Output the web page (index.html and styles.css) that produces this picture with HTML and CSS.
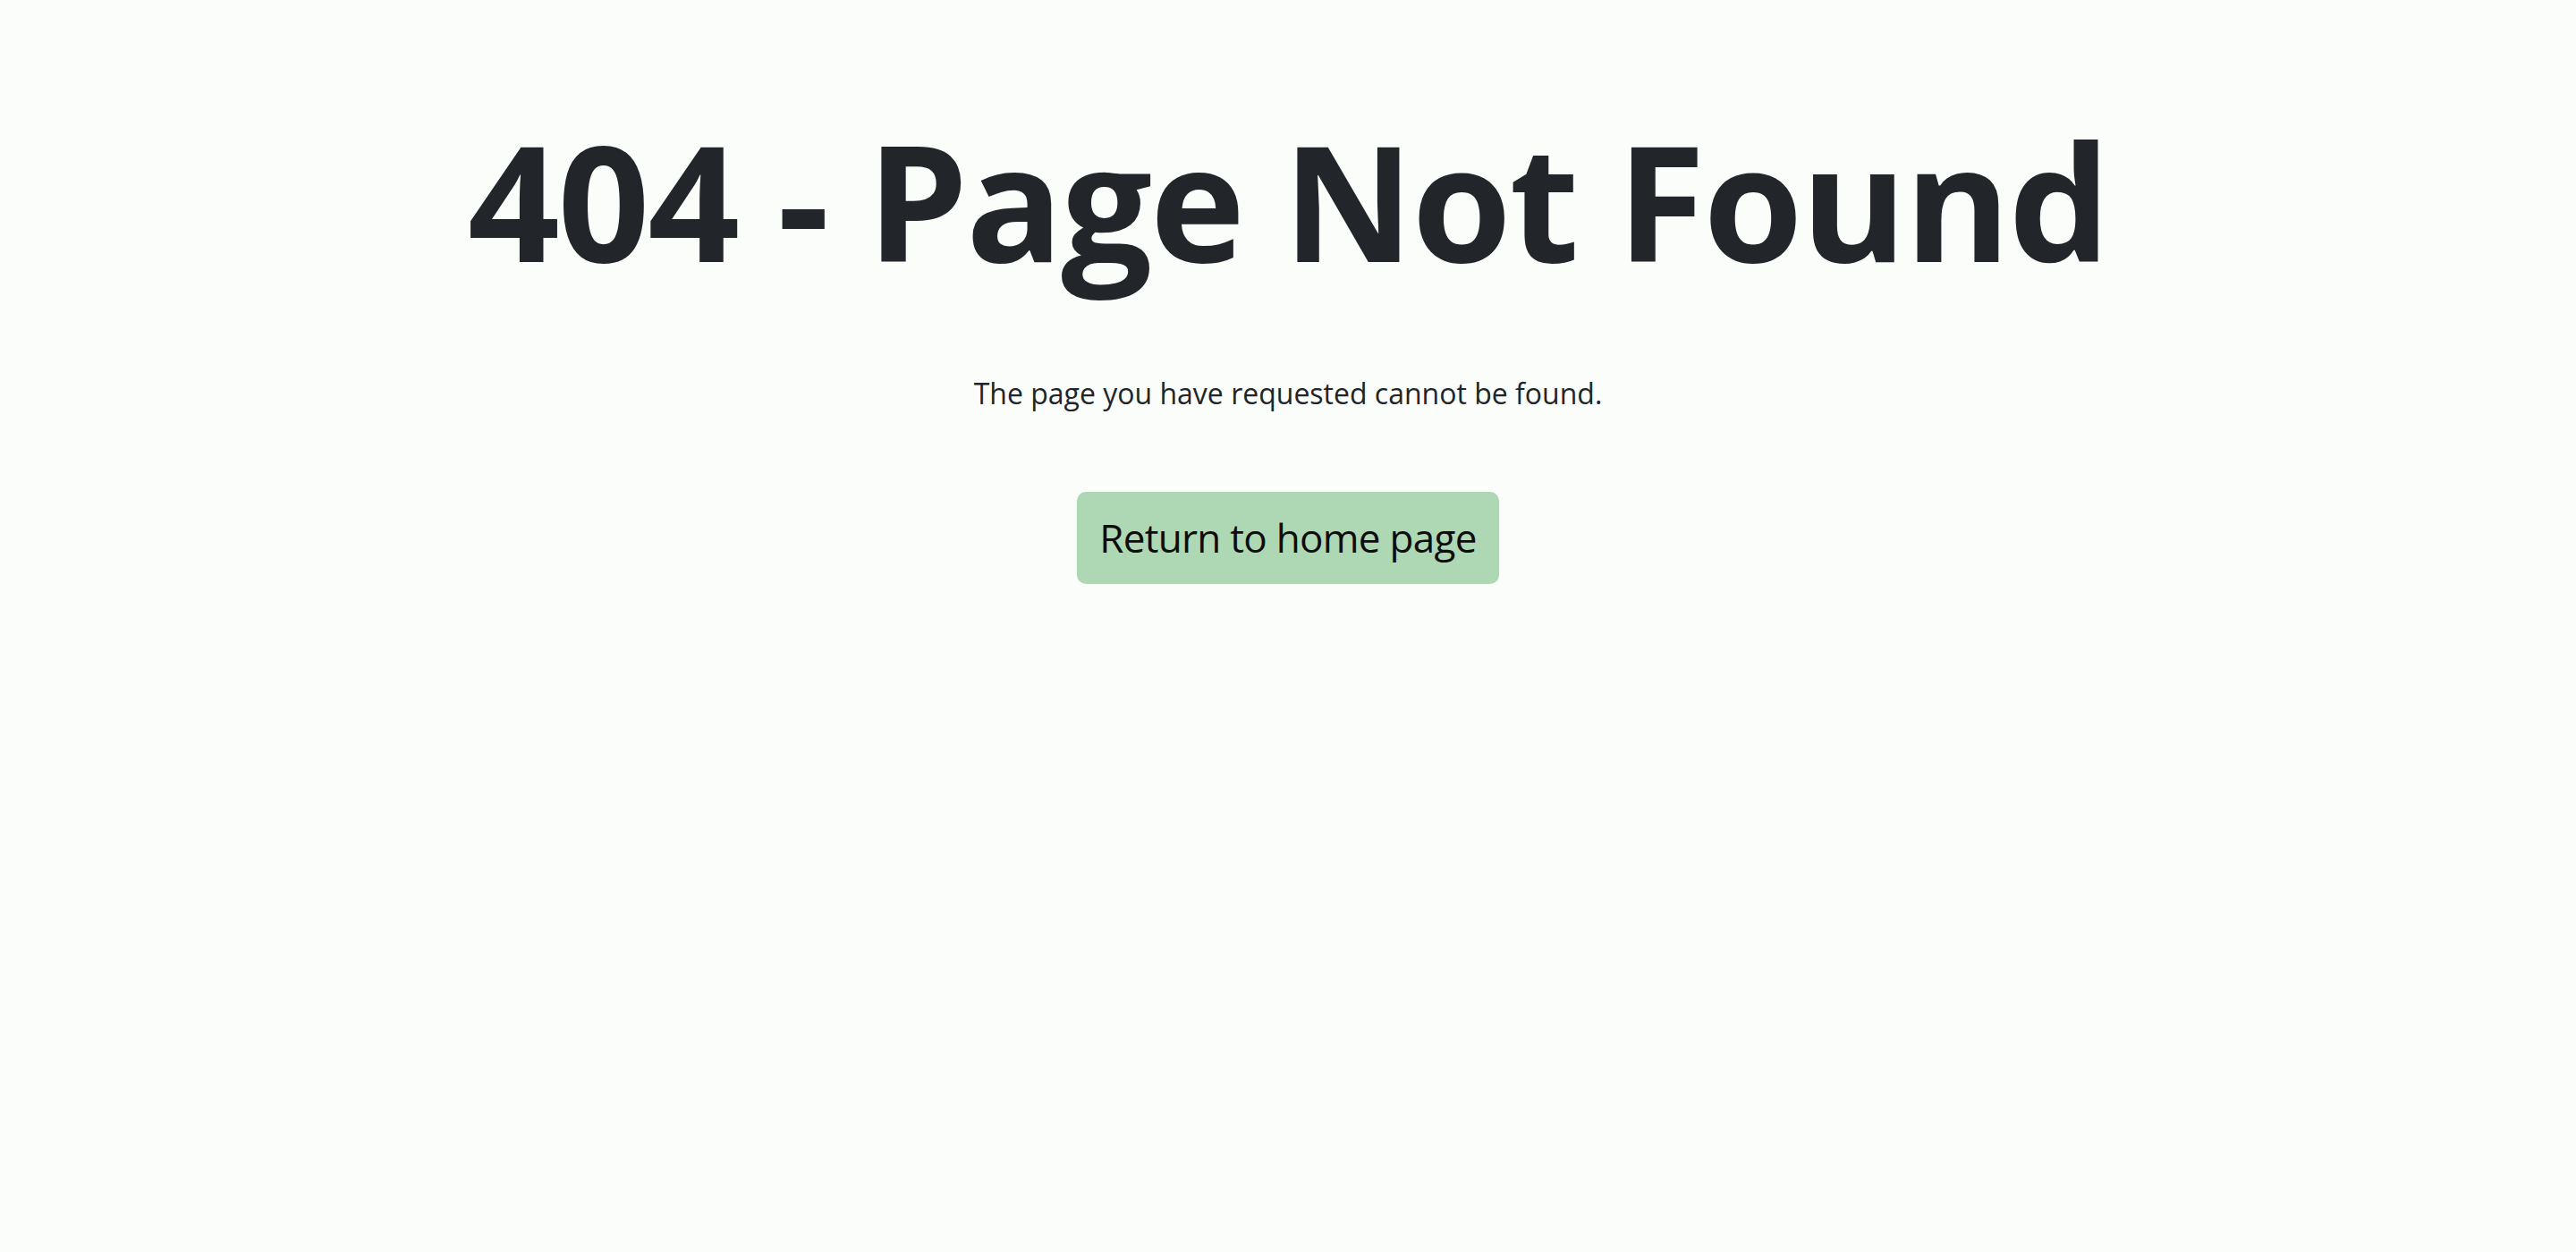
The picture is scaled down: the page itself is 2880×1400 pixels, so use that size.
FILE: index.html
```html
<!DOCTYPE html>
<html lang="en">
<head>
<meta charset="utf-8">
<title>404 - Page Not Found</title>
<link rel="stylesheet" href="styles.css">
</head>
<body>
<main class="notfound">
  <h1 class="notfound__title">404 - Page Not Found</h1>
  <p class="notfound__text">The page you have requested cannot be found.</p>
  <a class="notfound__button" href="#">Return to home page</a>
</main>
</body>
</html>
```
FILE: styles.css
```css
html, body {
  margin: 0;
  padding: 0;
  background: #fbfdfb;
}

body {
  font-family: "Open Sans", "Noto Sans", sans-serif;
  color: #212529;
  min-height: 100vh;
}

.notfound {
  display: flex;
  flex-direction: column;
  align-items: center;
  padding-top: 116px;
}

.notfound__title {
  margin: 0;
  font-size: 180px;
  font-weight: 700;
  line-height: 216px;
  letter-spacing: -2.3px;
  color: #22252a;
  white-space: nowrap;
}

.notfound__text {
  margin: 84px 0 0;
  font-size: 32px;
  line-height: 47px;
  font-weight: 400;
  color: #212529;
}

.notfound__button {
  margin-top: 87px;
  display: inline-block;
  padding: 18px 25px 19px;
  font-size: 44px;
  line-height: 66px;
  letter-spacing: -0.7px;
  color: #0d0d0d;
  background: #aed8b4;
  border-radius: 10px;
  text-decoration: none;
}
```
